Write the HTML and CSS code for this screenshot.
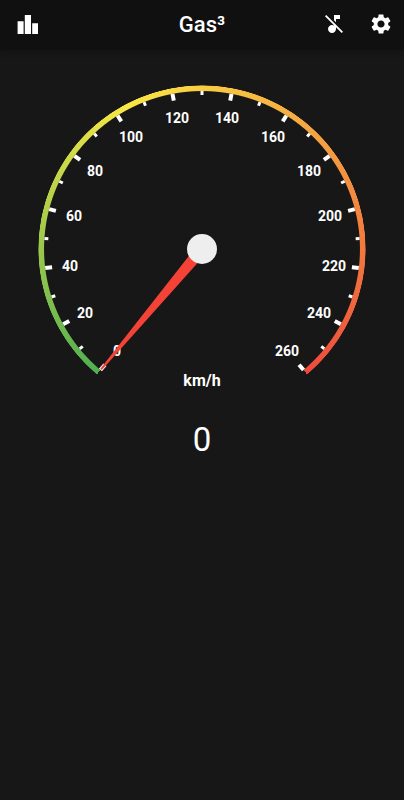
FILE: index.html
```html
<!DOCTYPE html>
<html lang="en">
<head>
  <meta charset="utf-8">
  <meta name="viewport" content="width=device-width, initial-scale=1">
  <title>Gas³</title>
  <link rel="stylesheet" href="styles.css">
</head>
<body>
  <header class="bar">
    <div class="actions">
      <button class="icon-button" type="button" aria-label="Statistics">
        <svg class="icon" viewBox="0 0 24 24"><path d="M1.6 9.3h6V22h-6zM8.8 3H15v19H8.8zM16.2 11.3H22V22h-5.8z"/></svg>
      </button>
    </div>
    <h1 class="title">Gas³</h1>
    <div class="actions actions-end">
      <button class="icon-button" type="button" aria-label="Sound off">
        <svg class="icon" viewBox="0 0 24 24"><path d="M4.27 3L3 4.27l9 9v.28c-.59-.34-1.27-.55-2-.55-2.21 0-4 1.79-4 4s1.79 4 4 4 4-1.79 4-4v-1.73L19.73 21 21 19.73 4.27 3zM14 7h4V3h-6v5.18l2 2z"/></svg>
      </button>
      <button class="icon-button" type="button" aria-label="Settings">
        <svg class="icon" viewBox="0 0 24 24"><path d="M19.14 12.94c.04-.3.06-.61.06-.94 0-.32-.02-.64-.07-.94l2.03-1.58c.18-.14.23-.41.12-.61l-1.92-3.32c-.12-.22-.37-.29-.59-.22l-2.39.96c-.5-.38-1.03-.7-1.62-.94l-.36-2.54c-.04-.24-.24-.41-.48-.41h-3.84c-.24 0-.43.17-.47.41l-.36 2.54c-.59.24-1.13.57-1.62.94l-2.39-.96c-.22-.08-.47 0-.59.22L2.74 8.87c-.12.21-.08.47.12.61l2.03 1.58c-.05.3-.09.63-.09.94s.02.64.07.94l-2.03 1.58c-.18.14-.23.41-.12.61l1.92 3.32c.12.22.37.29.59.22l2.39-.96c.5.38 1.03.7 1.62.94l.36 2.54c.05.24.24.41.48.41h3.84c.24 0 .44-.17.47-.41l.36-2.54c.59-.24 1.13-.56 1.62-.94l2.39.96c.22.08.47 0 .59-.22l1.92-3.32c.12-.22.07-.47-.12-.61l-2.01-1.58zM12 15.6c-1.98 0-3.6-1.62-3.6-3.6s1.62-3.6 3.6-3.6 3.6 1.62 3.6 3.6-1.62 3.6-3.6 3.6z"/></svg>
      </button>
    </div>
  </header>

  <main class="dashboard">
    <div class="gauge">
      <div class="ring"></div>
      <!-- Dial centred on 0,0; one scale step of 10 km/h is 280/26 degrees -->
      <svg class="dial" viewBox="-164 -164 328 328" role="img" aria-label="Speed 0 km/h">
        <g id="ticks" class="ticks"></g>
        <g class="labels">
          <text x="-85" y="107">0</text>
          <text x="-117" y="69">20</text>
          <text x="-132" y="22">40</text>
          <text x="-128" y="-28">60</text>
          <text x="-107" y="-73">80</text>
          <text x="-71" y="-107">100</text>
          <text x="-25" y="-126">120</text>
          <text x="25" y="-126">140</text>
          <text x="71" y="-107">160</text>
          <text x="107" y="-73">180</text>
          <text x="128" y="-28">200</text>
          <text x="132" y="22">220</text>
          <text x="117" y="69">240</text>
          <text x="85" y="107">260</text>
        </g>
        <text class="unit" x="0" y="137">km/h</text>
        <polygon class="needle" transform="rotate(40)" points="-6,0 6,0 1,157 -1,157"/>
        <circle class="hub" r="15"/>
      </svg>
    </div>
    <output class="speed">0</output>
  </main>
  <script src="gauge.js"></script>
</body>
</html>
```
FILE: styles.css
```css
* {
  box-sizing: border-box;
}

body {
  margin: 0;
  min-height: 100vh;
  background: #171717;
  color: #fff;
  font-family: Roboto, "Liberation Sans", sans-serif;
}

.bar {
  display: grid;
  grid-template-columns: 1fr auto 1fr;
  align-items: start;
  height: 50px;
  background: #101010;
  box-shadow: 0 1px 6px rgba(0, 0, 0, 0.3);
}

.actions {
  display: flex;
  padding-left: 4px;
}

.actions-end {
  justify-content: flex-end;
  padding-left: 0;
}

.icon-button {
  display: flex;
  align-items: center;
  justify-content: center;
  width: 47px;
  height: 48px;
  padding: 0;
  border: 0;
  background: none;
  color: inherit;
}

.icon {
  width: 24px;
  height: 24px;
  fill: currentColor;
}

.title {
  margin: 0;
  font-size: 22px;
  font-weight: 500;
  line-height: 50px;
}

.dashboard {
  display: flex;
  flex-direction: column;
  align-items: center;
  padding: 35px 38px;
}

.gauge {
  display: grid;
  width: 100%;
  max-width: 480px;
  aspect-ratio: 1;
}

.ring,
.dial {
  grid-area: 1 / 1;
  width: 100%;
  height: 100%;
}

.ring {
  border-radius: 50%;
  background: conic-gradient(from 220deg, #4fae51 0deg, #f9e745 112deg, #ee4a3c 280deg, transparent 280deg);
  mask: radial-gradient(closest-side, transparent 96%, #000 96.6%, #000 99.5%, transparent 100%);
}

.dial {
  overflow: visible;
}

.ticks {
  stroke: #fff;
}

.major {
  stroke-width: 4px;
}

.minor {
  stroke-width: 3px;
}

.labels,
.unit {
  fill: #fff;
  font-weight: 700;
  text-anchor: middle;
}

.labels {
  font-size: 14px;
}

.unit {
  font-size: 16px;
}

.needle {
  fill: #f44336;
}

.hub {
  fill: #eee;
}

.speed {
  margin-top: 7px;
  font-size: 33px;
  line-height: 40px;
}
```
FILE: gauge.js
```js
const ticks = document.getElementById("ticks");

for (let i = 0; i <= 26; i++) {
  const major = i % 2 === 0;
  const line = document.createElementNS("http://www.w3.org/2000/svg", "line");
  line.setAttribute("class", major ? "major" : "minor");
  line.setAttribute("y1", 158);
  line.setAttribute("y2", major ? 151 : 154);
  line.setAttribute("transform", `rotate(${40 + (i * 280) / 26})`);
  ticks.append(line);
}
```
